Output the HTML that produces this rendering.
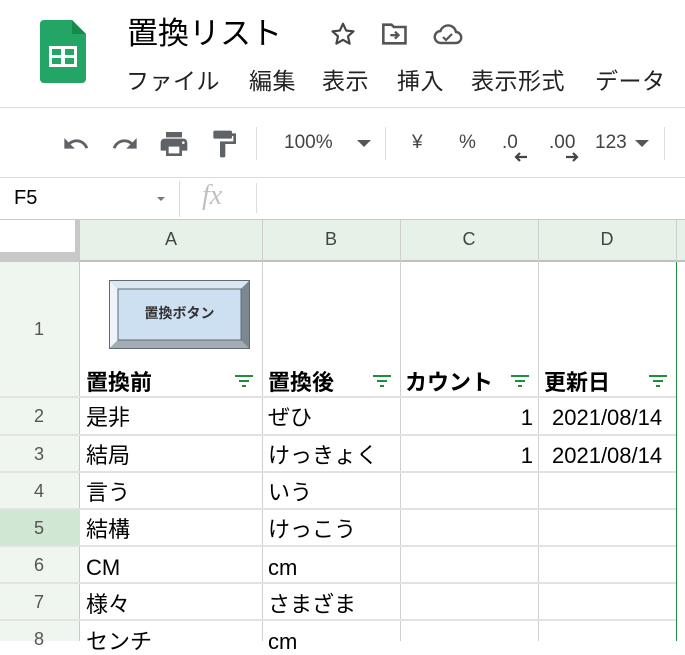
<!DOCTYPE html>
<html><head><meta charset="utf-8"><style>
*{margin:0;padding:0;box-sizing:border-box}
body{width:685px;height:641px;overflow:hidden;background:#fff;position:relative;font-family:"Liberation Sans","Noto Sans CJK JP",sans-serif;color:#000}
.a{position:absolute;white-space:nowrap}
.hl{position:absolute;height:1px;background:#e2e2e2}
.vl{position:absolute;width:1px;background:#e2e2e2}
.menu{font-size:23px;color:#222;top:64px;line-height:34px;letter-spacing:0.5px}
.tb{font-size:19px;color:#444;top:132px}
.cell{font-size:22px;position:absolute;white-space:nowrap;line-height:26px}
.rn{position:absolute;left:0;width:78px;text-align:center;font-size:18px;color:#555;line-height:20px}
.flt{position:absolute;width:20px;height:14px}
</style></head><body>
<svg class="a" style="left:40px;top:20px" width="46" height="64" viewBox="0 0 46 64">
<path d="M4 0H32L46 14V59a4 4 0 0 1-4 4H4a4 4 0 0 1-4-4V4a4 4 0 0 1 4-4z" fill="#23a566"/>
<path d="M32 0L46 14H32z" fill="#168a4b"/>
<rect x="9" y="26" width="28" height="21" fill="#fff"/>
<rect x="12" y="29" width="9" height="6" fill="#23a566"/><rect x="25" y="29" width="9" height="6" fill="#23a566"/>
<rect x="12" y="38" width="9" height="6" fill="#23a566"/><rect x="25" y="38" width="9" height="6" fill="#23a566"/>
</svg>
<div class="a" style="left:127px;top:14px;font-size:31px;line-height:40px;color:#000">置換リスト</div>
<svg class="a" style="left:330px;top:21px" width="26" height="26" viewBox="0 0 24 24"><path d="M12 2.5l2.9 6.3 6.8.7-5.1 4.6 1.5 6.8L12 17.4 5.9 20.9l1.5-6.8L2.3 9.5l6.8-.7z" fill="none" stroke="#444" stroke-width="2" stroke-linejoin="round"/></svg>
<svg class="a" style="left:381px;top:21px" width="28" height="26" viewBox="0 0 24 22"><path d="M2 3h7l2 2h10v14H2z" fill="none" stroke="#555" stroke-width="2.2"/><path d="M8 12h7M12 9l3 3-3 3" fill="none" stroke="#555" stroke-width="2"/></svg>
<svg class="a" style="left:433px;top:23px" width="30" height="24" viewBox="0 0 30 24"><path d="M8 20a6 6 0 0 1-.5-12A8 8 0 0 1 23 9a5.5 5.5 0 0 1-.5 11z" fill="none" stroke="#555" stroke-width="2.4"/><path d="M10 14l3 3 6-6" fill="none" stroke="#555" stroke-width="2.2"/></svg>
<div class="a menu" style="left:126px">ファイル</div>
<div class="a menu" style="left:249px">編集</div>
<div class="a menu" style="left:322px">表示</div>
<div class="a menu" style="left:397px">挿入</div>
<div class="a menu" style="left:471px">表示形式</div>
<div class="a menu" style="left:595px">データ</div>
<div class="hl" style="left:0;top:107px;width:685px;background:#dadce0"></div>
<svg class="a" style="left:60px;top:130px" width="32" height="28" viewBox="0 0 24 24"><path d="M12.5 8c-2.65 0-5.050.99-6.9 2.6L2 7v9h9l-3.620-3.62c1.390-1.16 3.160-1.88 5.120-1.88 3.54 0 6.55 2.31 7.6 5.5l2.37-.78C21.08 11.03 17.15 8 12.5 8z" fill="#5f6368"/></svg>
<svg class="a" style="left:109px;top:130px" width="32" height="28" viewBox="0 0 24 24"><path d="M18.4 10.6C16.55 8.99 14.15 8 11.5 8c-4.65 0-8.58 3.03-9.96 7.22L3.9 16c1.05-3.19 4.05-5.5 7.6-5.5 1.95 0 3.73.72 5.12 1.88L13 16h9V7l-3.6 3.6z" fill="#5f6368"/></svg>
<svg class="a" style="left:158px;top:128px" width="32" height="32" viewBox="0 0 24 24"><path d="M19 8H5c-1.66 0-3 1.34-3 3v6h4v4h12v-4h4v-6c0-1.66-1.34-3-3-3zm-3 11H8v-5h8v5zm3-7c-.55 0-1-.45-1-1s.45-1 1-1 1 .45 1 1-.45 1-1 1zm-1-9H6v4h12V3z" fill="#5f6368"/></svg>
<svg class="a" style="left:208px;top:128px" width="32" height="32" viewBox="0 0 24 24"><path d="M18 4V3c0-.55-.45-1-1-1H5c-.55 0-1 .45-1 1v4c0 .55.45 1 1 1h12c.55 0 1-.45 1-1V6h1v4H9v11c0 .55.45 1 1 1h2c.55 0 1-.45 1-1v-9h8V4h-3z" fill="#5f6368"/></svg>
<div class="vl" style="left:256px;top:127px;height:33px;background:#dadce0"></div>
<div class="a tb" style="left:284px">100%</div>
<svg class="a" style="left:357px;top:140px" width="14" height="8"><path d="M0 0h14L7 7z" fill="#555"/></svg>
<div class="vl" style="left:385px;top:127px;height:33px;background:#dadce0"></div>
<div class="a tb" style="left:412px">¥</div>
<div class="a tb" style="left:459px">%</div>
<div class="a tb" style="left:502px">.0</div>
<svg class="a" style="left:513px;top:152px" width="16" height="10"><path d="M14 5H3M7 1L3 5l4 4" fill="none" stroke="#444" stroke-width="2.2"/></svg>
<div class="a tb" style="left:549px">.00</div>
<svg class="a" style="left:565px;top:152px" width="16" height="10"><path d="M1 5h11M8 1l4 4-4 4" fill="none" stroke="#444" stroke-width="2.2"/></svg>
<div class="a tb" style="left:595px">123</div>
<svg class="a" style="left:635px;top:140px" width="14" height="8"><path d="M0 0h14L7 7z" fill="#555"/></svg>
<div class="vl" style="left:664px;top:127px;height:33px;background:#dadce0"></div>
<div class="hl" style="left:0;top:177px;width:685px;background:#dadce0"></div>
<div class="a" style="left:14px;top:187px;font-size:20px">F5</div>
<svg class="a" style="left:157px;top:197px" width="8" height="5"><path d="M0 0h8L4 4z" fill="#777"/></svg>
<div class="vl" style="left:179px;top:181px;height:36px;background:#dadce0"></div>
<div class="a" style="left:202px;top:180px;font-size:28px;font-style:italic;color:#c0c0c0;font-family:'Liberation Serif',serif">fx</div>
<div class="vl" style="left:256px;top:183px;height:30px;background:#dadce0"></div>
<div class="hl" style="left:0;top:219px;width:685px;background:#c8c8c8"></div>
<div class="a" style="left:80px;top:220px;width:605px;height:42px;background:#e6f2e8"></div>
<div class="a" style="left:0;top:220px;width:80px;height:42px;background:#fff;border-right:5px solid #c8c8c8;border-bottom:10px solid #c8c8c8"></div>
<div class="a" style="left:80px;top:260px;width:605px;height:2px;background:#c0c0c0"></div>
<div class="a" style="left:80px;top:229px;width:182px;text-align:center;font-size:18px;color:#444">A</div>
<div class="a" style="left:262px;top:229px;width:138px;text-align:center;font-size:18px;color:#444">B</div>
<div class="a" style="left:400px;top:229px;width:138px;text-align:center;font-size:18px;color:#444">C</div>
<div class="a" style="left:538px;top:229px;width:138px;text-align:center;font-size:18px;color:#444">D</div>
<div class="a" style="left:0;top:262px;width:80px;height:379px;background:#eef6ef;border-right:1px solid #c8c8c8"></div>
<div class="a" style="left:0;top:509px;width:80px;height:37px;background:#cfe7d3"></div>
<div class="vl" style="left:262px;top:220px;height:421px;background:#cfcfcf"></div>
<div class="vl" style="left:400px;top:220px;height:421px;background:#cfcfcf"></div>
<div class="vl" style="left:538px;top:220px;height:421px;background:#cfcfcf"></div>
<div class="vl" style="left:676px;top:262px;height:379px;background:#1e8e3e"></div>
<div class="vl" style="left:676px;top:220px;height:42px;background:#cfcfcf"></div>
<div class="hl" style="left:0;top:396px;width:676px;height:2px"></div>
<div class="hl" style="left:0;top:434px;width:676px;height:2px"></div>
<div class="hl" style="left:0;top:471px;width:676px;height:2px"></div>
<div class="hl" style="left:0;top:508px;width:676px;height:2px"></div>
<div class="hl" style="left:0;top:545px;width:676px;height:2px"></div>
<div class="hl" style="left:0;top:582px;width:676px;height:2px"></div>
<div class="hl" style="left:0;top:619px;width:676px;height:2px"></div>
<div class="rn" style="top:319px">1</div>
<div class="rn" style="top:406px">2</div>
<div class="rn" style="top:444px">3</div>
<div class="rn" style="top:481px">4</div>
<div class="rn" style="top:518px">5</div>
<div class="rn" style="top:555px">6</div>
<div class="rn" style="top:592px">7</div>
<div class="rn" style="top:629px">8</div>
<svg class="a" style="left:109px;top:280px" width="141" height="69" viewBox="0 0 141 69">
<rect x="0" y="0" width="141" height="69" fill="#5f6a72"/>
<polygon points="1,1 140,1 132,9 9,9" fill="#dbe8f4"/>
<polygon points="1,1 9,9 9,60 1,68" fill="#eef4fa"/>
<polygon points="140,1 140,68 132,60 132,9" fill="#7d8790"/>
<polygon points="1,68 9,60 132,60 140,68" fill="#a3acb4"/>
<rect x="9" y="9" width="123" height="51" fill="#cde0f2" stroke="#5f6a72" stroke-width="1"/>
</svg>
<div class="a" style="left:109px;top:303px;width:141px;text-align:center;font-size:14px;font-weight:bold;color:#333">置換ボタン</div>
<div class="cell" style="left:86px;top:370px;font-weight:bold">置換前</div>
<div class="cell" style="left:268px;top:370px;font-weight:bold">置換後</div>
<div class="cell" style="left:405px;top:370px;font-weight:bold">カウント</div>
<div class="cell" style="left:544px;top:370px;font-weight:bold">更新日</div>
<svg class="flt" style="left:234px;top:374px" viewBox="0 0 20 14"><path d="M1 2h18M5 7h10M8 12h4" stroke="#1e8e3e" stroke-width="2"/></svg>
<svg class="flt" style="left:372px;top:374px" viewBox="0 0 20 14"><path d="M1 2h18M5 7h10M8 12h4" stroke="#1e8e3e" stroke-width="2"/></svg>
<svg class="flt" style="left:510px;top:374px" viewBox="0 0 20 14"><path d="M1 2h18M5 7h10M8 12h4" stroke="#1e8e3e" stroke-width="2"/></svg>
<svg class="flt" style="left:648px;top:374px" viewBox="0 0 20 14"><path d="M1 2h18M5 7h10M8 12h4" stroke="#1e8e3e" stroke-width="2"/></svg>
<div class="cell" style="left:86px;top:405px">是非</div>
<div class="cell" style="left:268px;top:405px">ぜひ</div>
<div class="cell" style="left:400px;top:405px;width:133px;text-align:right">1</div>
<div class="cell" style="left:552px;top:405px">2021/08/14</div>
<div class="cell" style="left:86px;top:443px">結局</div>
<div class="cell" style="left:268px;top:443px">けっきょく</div>
<div class="cell" style="left:400px;top:443px;width:133px;text-align:right">1</div>
<div class="cell" style="left:552px;top:443px">2021/08/14</div>
<div class="cell" style="left:86px;top:480px">言う</div>
<div class="cell" style="left:268px;top:480px">いう</div>
<div class="cell" style="left:86px;top:517px">結構</div>
<div class="cell" style="left:268px;top:517px">けっこう</div>
<div class="cell" style="left:86px;top:555px">CM</div>
<div class="cell" style="left:268px;top:555px">cm</div>
<div class="cell" style="left:86px;top:592px">様々</div>
<div class="cell" style="left:268px;top:592px">さまざま</div>
<div class="cell" style="left:86px;top:629px">センチ</div>
<div class="cell" style="left:268px;top:629px">cm</div>
</body></html>
